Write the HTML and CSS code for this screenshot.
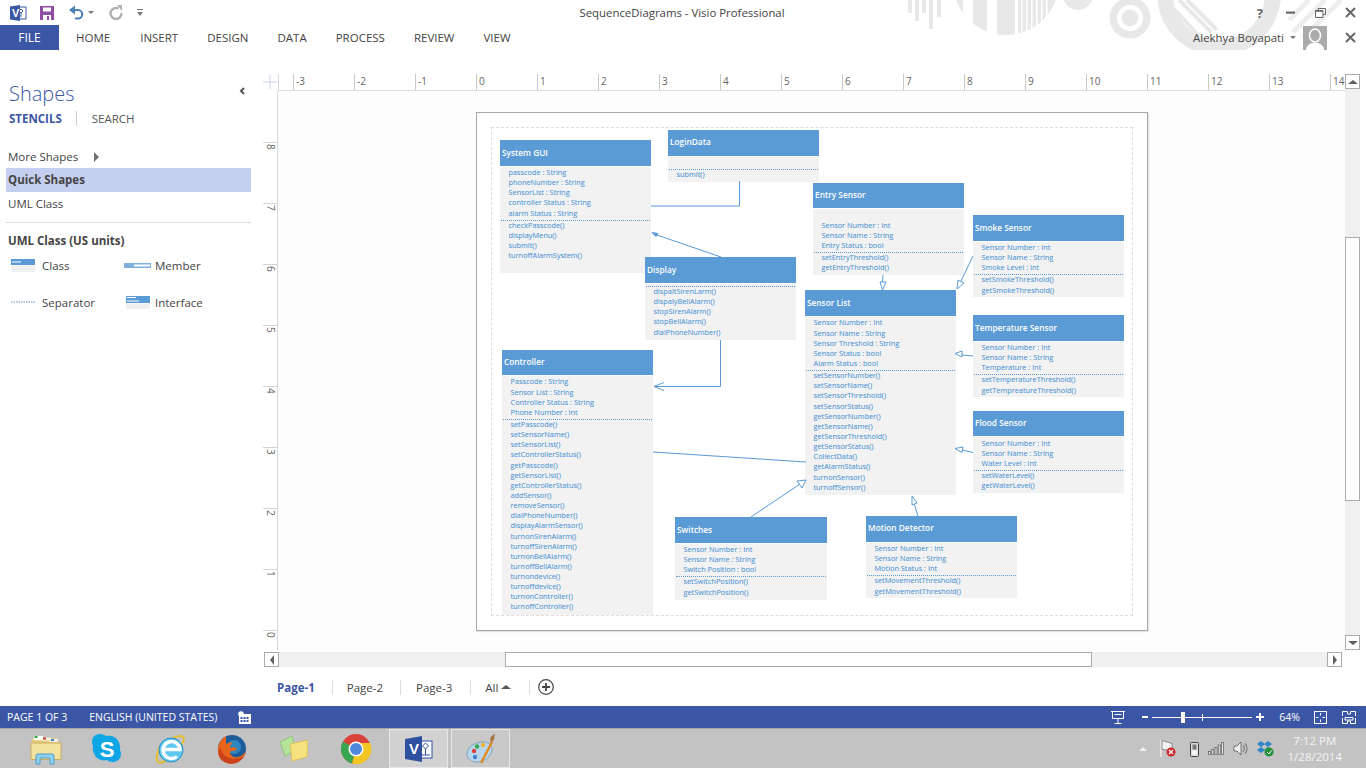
FILE: index.html
```html
<!DOCTYPE html>
<html lang="en">
<head>
<meta charset="utf-8">
<title>SequenceDiagrams - Visio Professional</title>
<link rel="stylesheet" href="styles.css">
</head>
<body>
<svg class="decor" viewBox="0 0 461 50" width="461" height="50" aria-hidden="true">
  <g fill="#e8e8e8">
    <rect x="3" y="0" width="4" height="13"/><rect x="10" y="0" width="4" height="21"/><rect x="17" y="0" width="4" height="13"/><rect x="24" y="0" width="4" height="29"/><rect x="32" y="0" width="4" height="17"/>
    <circle cx="101" cy="-18" r="53"/>
    <circle cx="173" cy="-5" r="15"/>
    <circle cx="225" cy="18" r="20.5"/>
    <circle cx="314" cy="-6" r="62"/>
  </g>
  <g fill="#fff">
    <polygon points="58,0 68,0 68,30 58,12"/>
    <rect x="82" y="0" width="10" height="40"/>
    <rect x="110" y="0" width="3" height="40"/><rect x="116" y="0" width="1.5" height="40"/><rect x="121" y="0" width="1.5" height="40"/><rect x="126" y="0" width="1.5" height="40"/><rect x="131" y="0" width="1.5" height="40"/><rect x="136" y="0" width="1.5" height="40"/><rect x="141" y="0" width="1.5" height="40"/>
    <circle cx="225" cy="18" r="13"/>
    <circle cx="314" cy="-6" r="46"/>
  </g>
  <circle cx="225" cy="18" r="8.5" fill="#e8e8e8"/>
  <g stroke="#e8e8e8" stroke-width="4" fill="none">
    <path d="M274 0 L306 32M282 0 L312 30M268 8 L296 38"/>
  </g>
  <g stroke="#eeeeee" stroke-width="5" fill="none">
    <path d="M420 0 L388 32M436 0 L398 38M404 0 L384 20"/>
  </g>
</svg>

<header class="titlebar">
  <div class="qat">
    <svg class="ic-visio" width="17" height="16" viewBox="0 0 17 16"><rect x="7" y="2" width="9" height="12" fill="#fff" stroke="#3b56a5"/><path d="M11 4l2 2-2 2-2-2zM11 8v4" stroke="#3b56a5" fill="none"/><polygon points="0,1.5 10,0 10,16 0,14.5" fill="#3b56a5"/><text x="2" y="12" class="ic-v">V</text></svg>
    <svg class="ic-save" width="14" height="14" viewBox="0 0 14 14"><path d="M0 0h14v14H0z" fill="#8e4fa3"/><rect x="3" y="1.5" width="8" height="4" fill="#fff"/><rect x="3" y="9" width="8" height="5" fill="#fff"/><rect x="7" y="10" width="2" height="4" fill="#8e4fa3"/></svg>
    <svg class="ic-undo" width="15" height="15" viewBox="0 0 15 15"><path d="M3 5h6a4.200 4.200 0 0 1 0 8.500H6" fill="none" stroke="#4a7fb5" stroke-width="2"/><polygon points="0,5 6,0.500 6,9.500" fill="#4a7fb5"/></svg>
    <span class="caret ic-undo-caret"></span>
    <svg class="ic-redo" width="14" height="15" viewBox="0 0 14 15"><path d="M9.500 3.500A5.500 5.500 0 1 0 12.500 8" fill="none" stroke="#b0b0b0" stroke-width="2.400"/><polygon points="8,0 13,0 13,6" fill="#b0b0b0"/></svg>
    <svg class="ic-cust" width="6" height="7" viewBox="0 0 6 7"><path d="M0 0h6v1H0z" fill="#777"/><polygon points="0,3 6,3 3,7" fill="#777"/></svg>
  </div>
  <div class="doc-title">SequenceDiagrams - Visio Professional</div>
  <div class="winctl">
    <span class="help">?</span>
    <svg width="10" height="3" viewBox="0 0 10 3"><rect width="9" height="2.200" y="0.500" fill="#666"/></svg>
    <svg width="11" height="10" viewBox="0 0 11 10"><path d="M3 2.500V.500h7.500v6H8M.500 2.500h7.500v7H.500z" fill="none" stroke="#666"/><path d="M.5 3h7.500" stroke="#666" stroke-width="1.500"/></svg>
    <svg width="11" height="11" viewBox="0 0 11 11"><path d="M1 1l9 9M10 1l-9 9" stroke="#666" stroke-width="2"/></svg>
  </div>
</header>

<nav class="tabs">
  <div class="tab-file">FILE</div>
  <div class="tab-list"><span>HOME</span><span>INSERT</span><span>DESIGN</span><span>DATA</span><span>PROCESS</span><span>REVIEW</span><span>VIEW</span></div>
  <div class="account">
    <span class="user">Alekhya Boyapati</span>
    <span class="caret"></span>
    <svg class="avatar" width="24" height="24" viewBox="0 0 24 24"><rect width="24" height="24" fill="#ababab"/><ellipse cx="12" cy="9.500" rx="5.500" ry="6.500" fill="none" stroke="#fff" stroke-width="1.600"/><path d="M3 24c0-4 3-6 6-7h6c3 1 6 3 6 7z" fill="#fff"/></svg>
    <svg class="closeribbon" width="11" height="11" viewBox="0 0 11 11"><path d="M1 1l9 9M10 1l-9 9" stroke="#666" stroke-width="2"/></svg>
  </div>
</nav>

<main class="main">
  <aside class="shapes">
    <div class="shapes-head">
      <h1>Shapes</h1>
      <svg class="collapse" width="6" height="8" viewBox="0 0 6 8"><path d="M5 1L2 4l3 3" fill="none" stroke="#555" stroke-width="2"/></svg>
    </div>
    <div class="stencil-tabs"><b>STENCILS</b><span>SEARCH</span></div>
    <div class="more">More Shapes <i class="arrow-r"></i></div>
    <div class="stencil sel">Quick Shapes</div>
    <div class="stencil">UML Class</div>
    <h2>UML Class (US units)</h2>
    <div class="masters">
      <div class="master">
        <svg width="24" height="13" viewBox="0 0 24 13"><rect width="24" height="6" fill="#5b9bd5"/><rect y="6.500" width="24" height="6.500" fill="#f0f0f0"/><rect x="1" y="2.500" width="9" height="1" fill="#fff"/></svg>
        <span>Class</span>
      </div>
      <div class="master">
        <svg width="27" height="5" viewBox="0 0 27 5"><rect width="27" height="5" fill="#7fb0dc"/><rect x="10" y="1.500" width="16" height="2" fill="#fff"/></svg>
        <span>Member</span>
      </div>
      <div class="master">
        <svg width="25" height="2" viewBox="0 0 25 2"><path d="M0 1h25" stroke="#5b8fc5" stroke-dasharray="1.500 1"/></svg>
        <span>Separator</span>
      </div>
      <div class="master">
        <svg width="24" height="13" viewBox="0 0 24 13"><rect width="24" height="7" fill="#5b9bd5"/><rect y="7.500" width="24" height="5.500" fill="#f0f0f0"/><rect x="1" y="1" width="9" height="1" fill="#fff"/><rect x="1" y="4.500" width="12" height="1" fill="#fff"/></svg>
        <span>Interface</span>
      </div>
    </div>
  </aside>

  <section class="workspace">
    <div class="corner">
      <svg width="15" height="16" viewBox="0 0 15 16"><path d="M0 8h14M7 1v14" stroke="#c8d2ec"/></svg>
    </div>
    <div class="hruler">
      <span>-3</span><span>-2</span><span>-1</span><span>0</span><span>1</span><span>2</span><span>3</span><span>4</span><span>5</span><span>6</span><span>7</span><span>8</span><span>9</span><span>10</span><span>11</span><span>12</span><span>13</span><span>14</span>
    </div>
    <div class="sb-v">
      <button class="sb-btn"><i class="tri-up"></i></button>
      <div class="sb-track-v"><div class="thumb-v"></div></div>
      <button class="sb-btn"><i class="tri-down"></i></button>
    </div>
    <div class="vruler">
      <span>8</span><span>7</span><span>6</span><span>5</span><span>4</span><span>3</span><span>2</span><span>1</span><span>0</span>
    </div>
    <div class="view">
      <div class="page">
        <div class="print-area"></div>

        <svg class="wires" viewBox="477 113 670 517" width="670" height="517" aria-hidden="true">
          <g fill="none" stroke="#5b9bd5" stroke-width="1">
            <path d="M739.500 181V206H651"/>
            <path d="M721 257L657 235"/>
            <path d="M720.500 340V386.500H654"/>
            <path d="M664 382.500L654 386.500L664 390.500"/>
            <path d="M653 452L806 462"/>
            <path d="M751 517L800 484"/>
            <path d="M797 481L806 480L802 488Z" fill="#fff"/>
            <path d="M918 516L914 503"/>
            <path d="M912 496L917 503L912 505Z" fill="#fff"/>
            <path d="M883 275L882.500 282"/>
            <path d="M880 282L886 282L882.500 290Z" fill="#fff"/>
            <path d="M973 256L961 281"/>
            <path d="M957 289L958 280L964 283Z" fill="#fff"/>
            <path d="M973 356L962 355"/>
            <path d="M955 353.500L962 351L962 357Z" fill="#fff"/>
            <path d="M973 452.500L962 450"/>
            <path d="M955 448.500L963 447L962 452.500Z" fill="#fff"/>
          </g>
          <path d="M652 232.500L658 233.500L656 236.500Z" fill="#5b9bd5" stroke="#5b9bd5"/>
        </svg>

        <article class="node n-login">
          <h3>LoginData</h3>
          <div class="body"><div class="attrs"></div><div class="ops"><p>submit()</p></div></div>
        </article>
        <article class="node n-system">
          <h3>System GUI</h3>
          <div class="body">
            <div class="attrs"><p>passcode : String</p><p>phoneNumber : String</p><p>SensorList : String</p><p>controller Status : String</p><p>alarm Status : String</p></div>
            <div class="ops"><p>checkPasscode()</p><p>displayMenu()</p><p>submit()</p><p>turnoffAlarmSystem()</p></div>
          </div>
        </article>
        <article class="node n-entry">
          <h3>Entry Sensor</h3>
          <div class="body">
            <div class="attrs"><p>Sensor Number : Int</p><p>Sensor Name : String</p><p>Entry Status : bool</p></div>
            <div class="ops"><p>setEntryThreshold()</p><p>getEntryThreshold()</p></div>
          </div>
        </article>
        <article class="node n-smoke">
          <h3>Smoke Sensor</h3>
          <div class="body">
            <div class="attrs"><p>Sensor Number : Int</p><p>Sensor Name : String</p><p>Smoke Level : Int</p></div>
            <div class="ops"><p>setSmokeThreshold()</p><p>getSmokeThreshold()</p></div>
          </div>
        </article>
        <article class="node n-list">
          <h3>Sensor List</h3>
          <div class="body">
            <div class="attrs"><p>Sensor Number : Int</p><p>Sensor Name : String</p><p>Sensor Threshold : String</p><p>Sensor Status : bool</p><p>Alarm Status : bool</p></div>
            <div class="ops"><p>setSensorNumber()</p><p>setSensorName()</p><p>setSensorThreshold()</p><p>setSensorStatus()</p><p>getSensorNumber()</p><p>getSensorName()</p><p>getSensorThreshold()</p><p>getSensorStatus()</p><p>CollectData()</p><p>getAlarmStatus()</p><p>turnonSensor()</p><p>turnoffSensor()</p></div>
          </div>
        </article>
        <article class="node n-temp">
          <h3>Temperature Sensor</h3>
          <div class="body">
            <div class="attrs"><p>Sensor Number : Int</p><p>Sensor Name : String</p><p>Temperature : Int</p></div>
            <div class="ops"><p>setTemperatureThreshold()</p><p>getTempreatureThreshold()</p></div>
          </div>
        </article>
        <article class="node n-flood">
          <h3>Flood Sensor</h3>
          <div class="body">
            <div class="attrs"><p>Sensor Number : Int</p><p>Sensor Name : String</p><p>Water Level : Int</p></div>
            <div class="ops"><p>setWaterLevel()</p><p>getWaterLevel()</p></div>
          </div>
        </article>
        <article class="node n-display">
          <h3>Display</h3>
          <div class="body">
            <div class="attrs"></div>
            <div class="ops"><p>dispaltSirenLarm()</p><p>dispalyBellAlarm()</p><p>stopSirenAlarm()</p><p>stopBellAlarm()</p><p>dialPhoneNumber()</p></div>
          </div>
        </article>
        <article class="node n-controller">
          <h3>Controller</h3>
          <div class="body">
            <div class="attrs"><p>Passcode : String</p><p>Sensor List : String</p><p>Controller Status : String</p><p>Phone Number : Int</p></div>
            <div class="ops"><p>setPasscode()</p><p>setSensorName()</p><p>setSensorList()</p><p>setControllerStatus()</p><p>getPasscode()</p><p>getSensorList()</p><p>getControllerStatus()</p><p>addSensor()</p><p>removeSensor()</p><p>dialPhoneNumber()</p><p>displayAlarmSensor()</p><p>turnonSirenAlarm()</p><p>turnoffSirenAlarm()</p><p>turnonBellAlarm()</p><p>turnoffBellAlarm()</p><p>turnondevice()</p><p>turnoffdevice()</p><p>turnonController()</p><p>turnoffController()</p></div>
          </div>
        </article>
        <article class="node n-switches">
          <h3>Switches</h3>
          <div class="body">
            <div class="attrs"><p>Sensor Number : Int</p><p>Sensor Name : String</p><p>Switch Position : bool</p></div>
            <div class="ops"><p>setSwitchPosition()</p><p>getSwitchPosition()</p></div>
          </div>
        </article>
        <article class="node n-motion">
          <h3>Motion Detector</h3>
          <div class="body">
            <div class="attrs"><p>Sensor Number : Int</p><p>Sensor Name : String</p><p>Motion Status : Int</p></div>
            <div class="ops"><p>setMovementThreshold()</p><p>getMovementThreshold()</p></div>
          </div>
        </article>
      </div>
    </div>
    <div class="sb-h">
      <button class="sb-btn"><i class="tri-left"></i></button>
      <div class="sb-track-h"><div class="thumb-h"></div></div>
      <button class="sb-btn"><i class="tri-right"></i></button>
    </div>
    <div class="page-tabs">
      <span class="ptab active">Page-1</span>
      <span class="ptab">Page-2</span>
      <span class="ptab">Page-3</span>
      <span class="ptab">All <i class="tri-up dark"></i></span>
      <svg class="addpage" width="16" height="16" viewBox="0 0 16 16"><circle cx="8" cy="8" r="7.300" fill="none" stroke="#444" stroke-width="1.200"/><path d="M8 4v8M4 8h8" stroke="#444" stroke-width="1.800"/></svg>
    </div>
  </section>
</main>

<footer class="status">
  <span class="st-page">PAGE 1 OF 3</span>
  <span class="st-lang">ENGLISH (UNITED STATES)</span>
  <svg class="st-macro" width="13" height="13" viewBox="0 0 13 13"><circle cx="3" cy="3" r="2.800" fill="#fff"/><rect x="1" y="3" width="12" height="10" fill="#fff"/><g fill="#3b56a5"><rect x="2.500" y="6" width="2" height="2"/><rect x="5.500" y="6" width="2" height="2"/><rect x="8.500" y="6" width="2" height="2"/><rect x="2.500" y="9" width="2" height="2"/><rect x="5.500" y="9" width="2" height="2"/><rect x="8.500" y="9" width="2" height="2"/></g></svg>
  <div class="st-right">
    <svg width="14" height="13" viewBox="0 0 14 13"><path d="M0 .500h14M1.500 .500v7h11v-7M7 7.500V12M3.500 12.500h7M3.500 3.500h7" fill="none" stroke="#fff"/></svg>
    <div class="zoom">
      <i class="z-minus"></i>
      <div class="z-track"><i class="z-tick"></i><i class="z-thumb"></i></div>
      <svg width="8" height="8" viewBox="0 0 8 8"><path d="M0 4h8M4 0v8" stroke="#fff" stroke-width="2"/></svg>
    </div>
    <span class="pct">64%</span>
    <svg class="fit" width="13" height="13" viewBox="0 0 13 13"><rect x=".5" y=".5" width="12" height="12" fill="none" stroke="#fff"/><path d="M6.500 2v2.500M6.500 8.500V11M2 6.500h2.500M8.500 6.500H11" stroke="#fff"/></svg>
    <svg width="14" height="13" viewBox="0 0 14 13"><path d="M.5 5V.5h5V3h3V.5h5V5M.5 7v5.500h5V10h3v2.500h5V7M3 6.500h8V9H3z" fill="none" stroke="#fff"/></svg>
  </div>
</footer>

<div class="taskbar">
  <div class="task-icons">
    <span class="ti ti-explorer"><svg width="33" height="32" viewBox="0 0 33 32"><path d="M3 5h24l2 5H1z" fill="#e6cf80"/><rect x="4" y="3" width="9" height="4" fill="#fff"/><rect x="4.500" y="3" width="3" height="2" fill="#35a83a"/><rect x="12" y="4.500" width="9" height="3" fill="#f4f1e0"/><rect x="13" y="4.500" width="3" height="2" fill="#c64030"/><rect x="20" y="6" width="8" height="3" fill="#f4f1e0"/><rect x="21" y="6" width="3" height="2" fill="#3a85d0"/><path d="M1 10h30v16.500H1z" fill="#f3e3a0" stroke="#c9ad63"/><path d="M6 31v-8q0-2 2-2h14q2 0 2 2v8h-4v-5q0-1-1-1H11q-1 0-1 1v5z" fill="#8fd0ef" stroke="#4f9ccb"/></svg></span>
    <span class="ti ti-skype"><svg width="30" height="32" viewBox="0 0 30 32"><path d="M8 1C3 1 0 4 0 9c0 2 .5 3 1 4-.5 3 0 7 3 11 3 3 7 4 11 3 1 1 3 2 6 2 5 0 8-4 8-8 0-2-.5-3-1-4 .5-3 0-7-3-11-3-3-7-4-11-3-1-1-4-2-6-2z" fill="#0fa6e6"/><text x="15" y="24" class="ic-s">S</text></svg></span>
    <span class="ti ti-ie"><svg width="32" height="32" viewBox="0 0 32 32"><path d="M7 10C2 18 0 27 3 29c3 2 10-2 17-9 6-7 11-14 8-16-2-2-7-1-11 2" fill="none" stroke="#e6bf2f" stroke-width="2"/><circle cx="16" cy="17" r="12" fill="#5ec8ef"/><path d="M8 16.500h17a8.500 8.500 0 1 0-3 7" fill="none" stroke="#fff" stroke-width="3.500"/><circle cx="16" cy="17" r="12" fill="none" stroke="#2b8fc5"/></svg></span>
    <span class="ti ti-ff"><svg width="30" height="32" viewBox="0 0 30 32"><circle cx="15" cy="16" r="14" fill="#1d5c9b"/><circle cx="17" cy="14" r="7" fill="#2e86c0"/><path d="M9 3C2 7-1 16 2 23c3 7 11 9 17 7 5-2 9-6 10-12-3 5-8 7-12 6-3-1-5-4-3-6 2 0 5 0 6-2-2-2-5-2-7-1 0-3 1-4 3-5-3-1-5 0-7 1 0-3 0-6 0-8z" fill="#e8661c"/><path d="M2 23c3 7 11 9 17 7 3-1 6-4 8-7-5 3-12 4-17 1-4-2-6-7-7-10-1 3-2 6-1 9z" fill="#c9421a"/></svg></span>
    <span class="ti ti-sticky"><svg width="30" height="26" viewBox="0 0 30 26"><polygon points="2,6 14,0 18,14 7,20" fill="#b4e39c" stroke="#8ec47a"/><polygon points="12,8 30,4 29,21 14,25" fill="#f6e17f" stroke="#d8c261"/></svg></span>
    <span class="ti ti-chrome"><svg width="32" height="32" viewBox="0 0 32 32"><circle cx="16" cy="16" r="15" fill="#d9433a"/><path d="M16 16L3 8.500A15 15 0 0 0 12 30.500z" fill="#3aa652"/><path d="M16 16L12 30.500A15 15 0 0 0 30 10H16z" fill="#f2c623"/><circle cx="16" cy="16" r="7.500" fill="#fff"/><circle cx="16" cy="16" r="6" fill="#4f88dc"/></svg></span>
    <span class="ti-btn"><svg width="28" height="26" viewBox="0 0 28 26"><rect x="14" y="5" width="13" height="17" fill="#fff" stroke="#2f4f9f"/><path d="M20.500 7l3 3-3 3-3-3zM20.500 13v6M16 19h9" stroke="#2f4f9f" fill="none"/><polygon points="0,3 17,0 17,26 0,23" fill="#2f4f9f"/><text x="4" y="18" class="ic-bigv">V</text></svg></span>
    <span class="ti-btn ti-paint"><svg width="30" height="32" viewBox="0 0 30 32"><path d="M1 21c0-7 8-12 16-12 5 0 9 3 9 7 0 8-9 14-17 13-5-1-8-4-8-8z" fill="#b9d7ec" stroke="#7fa3bf"/><circle cx="8" cy="18" r="2.200" fill="#d8443a"/><circle cx="11" cy="13.500" r="2.200" fill="#3aa652"/><circle cx="17" cy="12" r="2.200" fill="#f0b429"/><circle cx="9" cy="24" r="2.200" fill="#4a7fd0"/><path d="M15 30L26 9" stroke="#e08a27" stroke-width="2.500"/><path d="M25 10l-1-5 5-5-1 7z" fill="#a9794a"/></svg></span>
  </div>
  <div class="tray">
    <i class="tri-up tray-up"></i>
    <svg class="t-flag" width="16" height="17" viewBox="0 0 16 17"><path d="M1 0v17" stroke="#fff" stroke-width="1"/><path d="M2 .5l10 3v7l-10-1z" fill="#f0f0f0" stroke="#555" stroke-width=".6"/><circle cx="11" cy="12" r="4.500" fill="#d0262b"/><path d="M9 10l4 4M13 10l-4 4" stroke="#fff" stroke-width="1.200"/></svg>
    <svg class="t-batt" width="9" height="16" viewBox="0 0 9 16"><rect x=".5" y="1.500" width="8" height="14" rx="1" fill="#ddd" stroke="#444"/><rect x="2.500" y="3.500" width="4" height="5" fill="#777"/><rect x="2.500" y="9.500" width="4" height="4" fill="#fff"/></svg>
    <svg class="t-net" width="16" height="13" viewBox="0 0 16 13"><g fill="#e8e8e8" stroke="#555" stroke-width=".7"><rect x=".5" y="9.500" width="2" height="3"/><rect x="3.800" y="7.500" width="2" height="5"/><rect x="7" y="5.500" width="2" height="7"/><rect x="10.200" y="3" width="2" height="9.500"/><rect x="13.500" y=".5" width="2" height="12"/></g></svg>
    <svg class="t-vol" width="15" height="15" viewBox="0 0 15 15"><path d="M1 5h3l4-4v13l-4-4H1z" fill="#eee" stroke="#555" stroke-width=".8"/><path d="M10 4.500a4 4 0 0 1 0 6M12 2.500a7 7 0 0 1 0 10" fill="none" stroke="#777" stroke-width="1.100"/></svg>
    <svg class="t-drop" width="17" height="16" viewBox="0 0 17 16"><g fill="#2e86c9"><path d="M4 0l4 3-4 3-4-3zM11 0l4 3-4 3-4-3zM4 6l4 3-4 3-4-3zM11 6l4 3-4 3-4-3z"/></g><circle cx="12" cy="11" r="4.500" fill="#23913a"/><path d="M10 11l2 2 2.500-3.500" stroke="#fff" fill="none"/></svg>
    <div class="clock"><span>7:12 PM</span><span>1/28/2014</span></div>
  </div>
</div>
</body>
</html>
```
FILE: styles.css
```css
* { box-sizing: border-box; }
html, body { margin: 0; padding: 0; }
body {
  position: relative;
  width: 1366px;
  height: 768px;
  overflow: hidden;
  background: #fff;
  font-family: "Open Sans", "Liberation Sans", sans-serif;
  color: #444;
  display: flex;
  flex-direction: column;
}
body > header, body > nav, body > main, body > footer, body > div { flex: none; }
p, h1, h2, h3 { margin: 0; font-weight: normal; }
i { display: inline-block; }

.decor { position: absolute; left: 905px; top: 0; }

.titlebar {
  position: relative;
  height: 25px;
  display: grid;
  grid-template-columns: 1fr auto 1fr;
  align-items: center;
}
.qat { display: flex; align-items: center; padding-left: 10px; }
.ic-visio { margin-right: 13px; }
.ic-v { font: bold 11px "Liberation Sans", sans-serif; fill: #fff; }
.ic-save { margin-right: 15px; }
.ic-undo { margin-right: 4px; }
.caret { display: inline-block; width: 0; height: 0; border-left: 3px solid transparent; border-right: 3px solid transparent; border-top: 3px solid #777; }
.ic-undo-caret { margin-right: 15px; }
.ic-redo { margin-right: 14px; }
.doc-title { font-size: 11.400px; color: #444; padding-right: 2px; }
.winctl { display: flex; align-items: center; justify-content: flex-end; padding-right: 10px; gap: 19px; }
.help { font: bold 13px "Open Sans", sans-serif; color: #666; margin-right: 4px; }

.tabs { position: relative; height: 25px; display: flex; align-items: center; }
.tab-file { width: 59px; height: 25px; background: #3b56a5; color: #fff; font-size: 12px; line-height: 25px; text-align: center; }
.tab-list { display: flex; gap: 29px; padding: 0 0 1px 17px; font-size: 11.500px; color: #444; }
.tab-list span:first-child { margin-right: 1px; }
.account { margin-left: auto; display: flex; align-items: center; height: 25px; }
.user { font-size: 11.400px; color: #444; margin-right: 6px; }
.avatar { margin-left: 7px; }
.closeribbon { margin: 0 10px 0 18px; }

.main { height: 632px; margin-top: 24px; display: flex; }

.shapes { width: 263px; padding-left: 6px; flex: none; }
.shapes-head { display: flex; justify-content: space-between; height: 32px; padding: 6px 7px 0 3px; align-items: flex-start; width: 245px; }
.shapes-head h1 { font-size: 20px; font-weight: 300; color: #3b56a5; line-height: 28px; }
.collapse { margin-top: 7px; margin-right: -1px; }
.stencil-tabs { display: flex; align-items: center; height: 16px; padding-left: 3px; font-size: 11.500px; margin-top: 4px; }
.stencil-tabs b { color: #3b56a5; font-weight: 700; padding-right: 14px; border-right: 1px solid #ccc; font-size: 11.500px; }
.stencil-tabs span { padding-left: 15px; color: #555; }
.more { margin-top: 20px; height: 22px; line-height: 22px; font-size: 11.500px; padding-left: 2px; display: flex; align-items: center; }
.arrow-r { width: 0; height: 0; border-top: 5.500px solid transparent; border-bottom: 5.500px solid transparent; border-left: 5px solid #707070; margin-left: 16px; }
.stencil { width: 245px; height: 24px; line-height: 23px; font-size: 11.500px; padding-left: 2px; }
.stencil.sel { background: #c5cff0; font-weight: 700; color: #444; }
.stencil:not(.sel) { margin-bottom: 6px; }
.shapes h2 { width: 245px; border-top: 1px solid #ddd; padding: 9px 0 0 2px; font-size: 11.500px; font-weight: 700; color: #444; height: 27px; line-height: 17px; }
.masters { display: grid; grid-template-columns: 113px 113px; grid-auto-rows: 37px; padding-left: 5px; margin-top: 5px; }
.master { display: flex; align-items: center; font-size: 11.500px; height: 22px; }
.master svg { flex: none; margin-right: 7px; }
.master:nth-child(2) svg { margin-right: 4px; }
.master:nth-child(3) svg { margin-right: 6px; }
.master:nth-child(4) svg { margin: 0 5px 0 2px; }

.workspace {
  width: 1103px;
  display: grid;
  grid-template-columns: 15px 1067px 15px 6px;
  grid-template-rows: 17px 559px 2px 15px 39px;
  flex: none;
}
.corner { grid-column: 1; grid-row: 1; }
.corner svg { display: block; }
.hruler {
  grid-column: 2; grid-row: 1;
  display: flex;
  padding-left: 14px;
  overflow: hidden;
  border-bottom: 1px solid #dcdcdc;
  border-left: 1px solid #d8d8d8;
}
.hruler span {
  flex: 0 0 61px;
  height: 16px;
  border-left: 1px solid #c8c8c8;
  font-size: 10px;
  line-height: 15px;
  padding-left: 2px;
  color: #666;
}
.vruler {
  grid-column: 1; grid-row: 2;
  padding-top: 51px;
  overflow: hidden;
  border-right: 1px solid #d8d8d8;
}
.vruler span {
  display: block;
  height: 61px;
  border-top: 1px solid #d4d4d4;
  font-size: 10px;
  writing-mode: vertical-rl;
  line-height: 15px;
  padding-top: 1px;
  color: #666;
}
.view { grid-column: 2; grid-row: 2; background: #fdfdfd; padding: 21px 0 0 198px; overflow: hidden; }
.page {
  position: relative;
  width: 672px;
  height: 519px;
  background: #fff;
  border: 1px solid #a6a6ae;
  box-shadow: 1px 1px 1px #e4e4e4;
}
.print-area { position: absolute; left: 14px; top: 14px; width: 642px; height: 489px; border: 1px dashed #e2dadf; }
.wires { position: absolute; left: 0; top: 0; z-index: 2; }

.node { position: absolute; width: 151px; color: #5b9bd5; font-size: 7.350px; text-shadow: 0 0 .5px rgba(91, 155, 213, .45); }
.node h3 {
  height: 26px;
  background: #5b9bd5;
  color: #fff;
  font-size: 8.300px;
  font-weight: 600;
  line-height: 25px;
  padding-left: 2px;
  text-shadow: none;
}
.body { margin-top: 1px; background: #f2f2f2; }
.body p { height: 10.150px; line-height: 9px; white-space: nowrap; padding-left: 8.500px; }
.attrs { padding-bottom: 1px; }
.ops { border-top: 1px dotted #5b9bd5; margin: 0 1px; }
.ops p { margin-left: -1px; }

.n-login { left: 191px; top: 17px; }
.n-login h3 { line-height: 24px; }
.n-login .body { height: 25px; }
.n-login .attrs { height: 12px; }
.n-system { left: 23px; top: 27px; }
.n-system .body { height: 106px; }
.n-system .attrs { padding-top: 1px; }
.n-entry { left: 336px; top: 70px; }
.n-entry h3 { height: 25px; line-height: 24px; }
.n-entry .body { height: 66px; }
.n-entry .attrs { padding-top: 11.500px; }
.n-smoke { left: 496px; top: 102px; }
.n-smoke .body { height: 55px; }
.n-smoke .attrs { padding-top: 1px; }
.n-list { left: 328px; top: 177px; }
.n-list .body { height: 178px; }
.n-list .attrs { padding-top: 1.400px; }
.n-temp { left: 496px; top: 202px; }
.n-temp .body { height: 55px; }
.n-temp .attrs { padding-top: 1px; }
.n-flood { left: 496px; top: 298px; }
.n-flood h3 { height: 25px; line-height: 24px; }
.n-flood .body { height: 56px; }
.n-flood .attrs { padding-top: 1.500px; }
.n-display { left: 168px; top: 144px; }
.n-display .body { height: 56px; }
.n-display .attrs { height: 2px; padding: 0; }
.n-controller { left: 25px; top: 237px; }
.n-controller h3 { height: 25px; line-height: 24px; }
.n-controller .body { height: 239px; }
.n-controller .attrs { padding-top: 1.400px; }
.n-switches { left: 198px; top: 404px; width: 152px; }
.n-switches .body { height: 56px; }
.n-switches .attrs { padding-top: 1px; }
.n-motion { left: 389px; top: 403px; }
.n-motion h3 { line-height: 24px; }
.n-motion .body { height: 55px; }
.n-motion .attrs { padding-top: 1px; }

.sb-btn { display: flex; align-items: center; justify-content: center; width: 15px; height: 15px; padding: 0; background: #fff; border: 1px solid #ababab; flex: none; }
.sb-v { grid-column: 3; grid-row: 1 / span 2; display: flex; flex-direction: column; }
.sb-track-v { flex: 1; background: #f0f0f0; padding-top: 148px; }
.thumb-v { height: 264px; background: #fff; border: 1px solid #ababab; }
.sb-h { grid-column: 1 / span 3; grid-row: 4; display: flex; padding: 0 18px 0 1px; }
.sb-track-h { flex: 1; background: #f0f0f0; padding-left: 226px; }
.thumb-h { width: 587px; height: 15px; background: #fff; border: 1px solid #ababab; }
.tri-up, .tri-down, .tri-left, .tri-right { width: 0; height: 0; }
.tri-up { border-left: 5px solid transparent; border-right: 5px solid transparent; border-bottom: 4px solid #606060; }
.tri-down { border-left: 5px solid transparent; border-right: 5px solid transparent; border-top: 4px solid #606060; }
.tri-left { border-top: 5px solid transparent; border-bottom: 5px solid transparent; border-right: 4px solid #606060; }
.tri-right { border-top: 5px solid transparent; border-bottom: 5px solid transparent; border-left: 4px solid #606060; }

.page-tabs { grid-column: 1 / span 3; grid-row: 5; display: flex; align-items: center; padding-left: 14px; font-size: 11.500px; color: #444; }
.ptab { display: flex; align-items: center; height: 15px; margin-top: 1px; padding-right: 17px; margin-right: 14px; border-right: 1px solid #ddd; }
.ptab:nth-child(2) { margin-right: 15px; }
.ptab:nth-child(3) { padding-right: 18px; margin-right: 14px; }
.ptab:nth-child(4) { padding-right: 18px; margin-right: 15px; }
.ptab.active { color: #3b56a5; font-weight: 700; }
.tri-up.dark { margin-left: 3px; border-bottom-color: #555; }
.addpage { margin-left: -7px; }

.status { height: 22px; background: #3b56a5; color: #fff; display: flex; align-items: center; font-size: 10.500px; }
.st-page { margin-left: 7px; }
.st-lang { margin-left: 22px; }
.st-macro { margin-left: 21px; }
.st-right { margin-left: auto; display: flex; align-items: center; padding-right: 10px; }
.zoom { display: flex; align-items: center; margin-left: 17px; }
.z-minus { width: 6px; height: 2px; background: #fff; }
.z-track { position: relative; width: 100px; height: 1px; background: #fff; margin: 0 4px; }
.z-tick { position: absolute; left: 50px; top: -3px; width: 1px; height: 7px; background: #fff; }
.z-thumb { position: absolute; left: 29px; top: -5px; width: 4px; height: 11px; background: #fff; }
.pct { margin-left: 15px; font-size: 10.500px; }
.fit { margin: 0 15px 0 14px; }

.taskbar { height: 40px; background: #c3c3c3; border-top: 1px solid #a8a8a8; display: flex; align-items: center; }
.task-icons { display: flex; align-items: center; height: 39px; }
.ti { display: flex; align-items: center; justify-content: center; }
.ti-explorer { margin-left: 30px; width: 33px; }
.ti-skype { margin-left: 29px; width: 30px; }
.ti-ie { margin-left: 33px; width: 32px; }
.ti-ff { margin-left: 30px; width: 30px; }
.ti-sticky { margin-left: 31px; width: 30px; }
.ti-chrome { margin-left: 32px; width: 32px; }
.ti-btn { display: flex; align-items: center; justify-content: center; width: 59px; height: 39px; margin-left: 17px; border: 1px solid #e8e8e8; background: #d2d2d2; }
.ti-paint { margin-left: 3px; background: #c9c9c9; }
.tray { margin-left: auto; display: flex; align-items: center; padding-right: 24px; }
.tray-up { border-bottom-color: #f2f2f2; border-left-width: 4px; border-right-width: 4px; margin-right: 13px; }
.t-flag { margin-right: 14px; }
.t-batt { margin-right: 9px; }
.t-net { margin-right: 9px; }
.t-vol { margin-right: 9px; }
.t-drop { margin-right: 14px; }
.clock { display: flex; flex-direction: column; align-items: center; color: #f4f4f4; font-size: 11.500px; line-height: 16px; }
.ic-s { font: bold 22px "Liberation Sans", sans-serif; fill: #fff; text-anchor: middle; }
.ic-bigv { font: bold 15px "Liberation Sans", sans-serif; fill: #fff; }
```
